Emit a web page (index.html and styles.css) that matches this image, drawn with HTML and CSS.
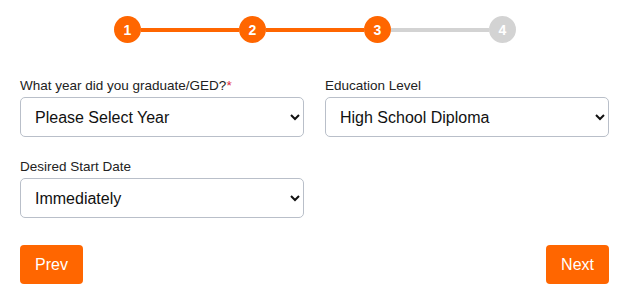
FILE: index.html
```html
<!DOCTYPE html>
<html lang="en">
<head>
  <meta charset="UTF-8" />
  <title>Education</title>
  <link rel="stylesheet" href="styles.css">
</head>
<body>
  <div class="form-wrap">
    <!-- Progress steps -->
    <div class="steps">
      <span class="step done">1</span>
      <span class="bar done"></span>
      <span class="step done">2</span>
      <span class="bar done"></span>
      <span class="step done">3</span>
      <span class="bar"></span>
      <span class="step">4</span>
    </div>

    <div class="fields">
      <div class="field">
        <label for="gradYear">What year did you graduate/GED?<span class="req">*</span></label>
        <select id="gradYear">
          <option>Please Select Year</option>
        </select>
      </div>
      <div class="field">
        <label for="eduLevel">Education Level</label>
        <select id="eduLevel">
          <option>High School Diploma</option>
        </select>
      </div>
      <div class="field">
        <label for="startDate">Desired Start Date</label>
        <select id="startDate">
          <option>Immediately</option>
        </select>
      </div>
    </div>

    <div class="nav-buttons">
      <button class="btn">Prev</button>
      <button class="btn">Next</button>
    </div>
  </div>
</body>
</html>
```

FILE: styles.css
```css
body {
  margin: 0;
  font-family: "Liberation Sans", Arial, sans-serif;
  color: #222;
  background: #fff;
}
.form-wrap {
  width: 589px;
  padding: 16px 18px 0 20px;
}
/* Progress steps */
.steps {
  display: flex;
  align-items: center;
  width: 402px;
  margin: 0 auto 0 94px;
}
.step {
  width: 27px;
  height: 27px;
  border-radius: 50%;
  background: #d3d3d3;
  color: #fff;
  font-size: 14px;
  font-weight: bold;
  display: flex;
  align-items: center;
  justify-content: center;
  flex-shrink: 0;
}
.step.done {
  background: #ff6600;
}
.bar {
  flex: 1;
  height: 4px;
  background: #d3d3d3;
}
.bar.done {
  background: #ff6600;
}
/* Fields */
.fields {
  display: grid;
  grid-template-columns: 284px 284px;
  column-gap: 21px;
  row-gap: 22px;
  margin-top: 35px;
}
.field label {
  display: block;
  font-size: 13.5px;
  line-height: 15px;
  margin-bottom: 4px;
}
.req {
  color: #e0263c;
}
.field select {
  width: 284px;
  height: 40px;
  font-family: "Liberation Sans", Arial, sans-serif;
  font-size: 16px;
  color: #111;
  padding: 0 10px;
  border: 1px solid #b9bfc9;
  border-radius: 5px;
  background: #fff;
}
/* Buttons */
.nav-buttons {
  display: flex;
  justify-content: space-between;
  margin-top: 27px;
}
.btn {
  height: 39px;
  padding: 0 15px;
  background: #ff6600;
  color: #fff;
  border: none;
  border-radius: 4px;
  font-family: "Liberation Sans", Arial, sans-serif;
  font-size: 16px;
  cursor: pointer;
}
```
